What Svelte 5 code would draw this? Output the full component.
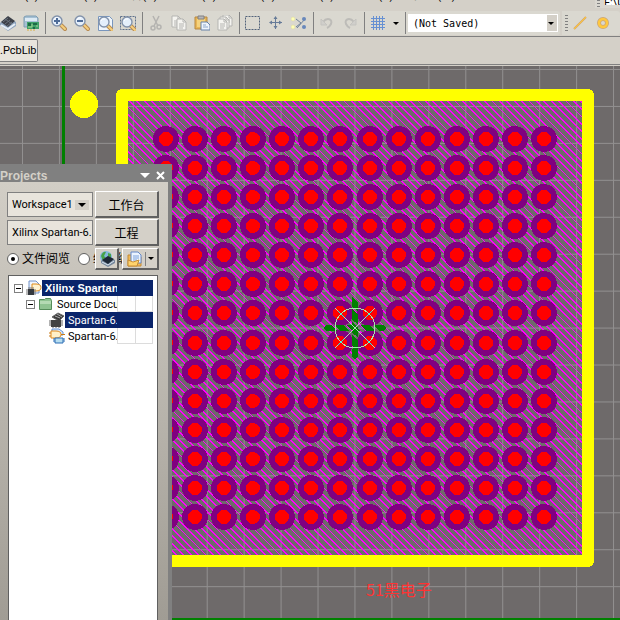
<script>
    const menus = ['文件(F)', '编辑(E)', '察看(V)', '工程(P)', '放置(P)', '工具(T)', '报告(R)', '窗口(W)'];

    const tools = [
        'chip', 'board', '|',
        'zoomIn', 'zoomOut', 'zoomPage', 'zoomArea', '|',
        'cut', 'copy', 'paste', 'duplicate', '|',
        'select', 'move', 'deselect', '|',
        'undo', 'redo', '|',
        'grid'
    ];

    // 14 x 14 ball grid
    const pitch = 29.08;
    const pads = [];
    for (let row = 0; row < 14; row++) {
        for (let col = 0; col < 14; col++) {
            pads.push({ x: Math.round(166 + col * pitch), y: Math.round(73 + row * pitch) });
        }
    }

    // 45 degree fill lines, clipped to the outline
    let hatch = '';
    for (let x = -322; x < 582; x += 7.4) {
        hatch += `M${x.toFixed(1)} 35l454 454`;
    }

    let view = $state('file');
    let saved = $state('(Not Saved)');
    let workspace = $state('Workspace1');
    let project = $state('Xilinx Spartan-6.LibPkg');
    let showProjects = $state(true);

    let selected = $state('pcb');
    const tree = [
        { id: 'root', level: 0, icon: 'project', text: 'Xilinx Spartan-6', open: true },
        { id: 'source', level: 1, icon: 'folder', text: 'Source Documents', open: true },
        { id: 'pcb', level: 2, icon: 'pcblib', text: 'Spartan-6.PcbLib' },
        { id: 'sch', level: 2, icon: 'schlib', text: 'Spartan-6.SchLib' }
    ];
</script>

{#snippet lens(x, y)}
    <path d="M{x + 4} {y + 4}l4 4" stroke="#b98a50" stroke-width="4" stroke-linecap="round" />
    <path d="M{x + 4} {y + 4}l4 4" stroke="#f5cf7e" stroke-width="2" stroke-linecap="round" />
    <circle cx={x} cy={y} r="5" fill="#e4effb" stroke="#8292aa" stroke-width="1.4" />
    <path d="M{x - 3} {y - 1}q1-3 4-2" stroke="#fff" fill="none" />
{/snippet}

{#snippet sheet(x, y, c)}
    <path d="M{x} {y}h6l3 3v8h-9z" fill="#f5f4f0" stroke={c} />
    <path d="M{x + 6} {y}v3h3M{x + 2} {y + 5}h5M{x + 2} {y + 7}h5M{x + 2} {y + 9}h4" fill="none" stroke={c} />
{/snippet}

{#snippet icon(name)}
    <svg class="icon" width="16" height="16" viewBox="0 0 16 16" fill="none" aria-hidden="true">
        {#if name === 'chip'}
            <path d="M0 8l7-6 9 5v4l-8 5-8-6z" fill="#8ea4be" />
            <path d="M1 10l7 4 7-5" stroke="#e5eef6" stroke-width="2" />
            <path d="M1 7l7-6 7 5-7 6z" fill="#3c4048" />
            <path d="M3 7l5-4M5 9l5-4M7 11l5-4M5 4l7 5" stroke="#68717c" />
        {:else if name === 'board'}
            <path d="M1 2l2-1h10l2 2v9H1z" fill="#a5c0d4" stroke="#7f9db2" />
            <path d="M2 3h12v3H2z" fill="#dceaf4" />
            <path d="M4 7h12v7H4z" fill="#3f9f68" />
            <path d="M5 8h3v3H5zM10 8h4v2h-4zM10 12h2v2h-2z" fill="#1d6b45" />
            <path d="M5 12h4M13 11h2M9 9v3" stroke="#a6d990" />
            <path d="M5 14v2M8 14v2M11 14v2" stroke="#d9ad40" />
        {:else if name === 'zoomIn'}
            {@render lens(6, 6)}
            <path d="M3 6h6M6 3v6" stroke="#4e6c98" stroke-width="2" />
        {:else if name === 'zoomOut'}
            {@render lens(6, 6)}
            <path d="M3 6h6" stroke="#4e6c98" stroke-width="2" />
        {:else if name === 'zoomPage'}
            <path d="M1.5 1.5h11l3 3v11h-14z" fill="#eff5fb" stroke="#7996bd" />
            {@render lens(7, 7)}
        {:else if name === 'zoomArea'}
            <rect x="0.5" y="1.5" width="15" height="13" stroke="#5e718b" stroke-dasharray="2 1" />
            {@render lens(7, 7)}
        {:else if name === 'cut'}
            <path d="M5 1l5 10M11 1L6 11" stroke="#b4b3b0" stroke-width="1.5" />
            <circle cx="5" cy="13" r="2" stroke="#b4b3b0" stroke-width="1.5" />
            <circle cx="11" cy="12" r="2" stroke="#b4b3b0" stroke-width="1.5" />
        {:else if name === 'copy'}
            {@render sheet(1, 1, '#b5b5b2')}
            {@render sheet(6, 4, '#b5b5b2')}
        {:else if name === 'paste'}
            <path d="M1 2h12v12H1z" fill="#e8b657" stroke="#b78842" />
            <path d="M3 4h8v8H3z" fill="#f5d27d" />
            <path d="M4 1h6v3H4z" fill="#b7b7b9" stroke="#808083" />
            <path d="M7 7h6l3 3v5H7z" fill="#eef4fc" stroke="#6681a8" />
            <path d="M9 10h3M9 12h5" stroke="#8ea8cc" />
        {:else if name === 'duplicate'}
            {@render sheet(6, 0, '#b5b5b2')}
            {@render sheet(3, 2, '#b5b5b2')}
            {@render sheet(1, 4, '#b5b5b2')}
        {:else if name === 'select'}
            <rect x="0.5" y="1.5" width="14" height="13" stroke="#52637a" stroke-dasharray="2 1" />
        {:else if name === 'move'}
            <path d="M7.5 2v12M2 7.5h12" stroke="#667b98" />
            <path d="M7.5 1l2 3h-4zM7.5 14l2-3h-4zM1 7.5l3-2v4zM14 7.5l-3-2v4z" fill="#667b98" />
        {:else if name === 'deselect'}
            <path d="M5 4l5 4-5 4M14 4L6 13" stroke="#70839c" />
            <circle cx="2" cy="4" r="2" fill="#ffffb5" stroke="#d9d7a1" stroke-width="0.5" />
            <circle cx="2" cy="12" r="2" fill="#ffffb5" stroke="#d9d7a1" stroke-width="0.5" />
            <circle cx="13" cy="4" r="2" fill="#6888bb" />
            <circle cx="13" cy="12" r="2" fill="#6888bb" />
        {:else if name === 'undo'}
            <path d="M4 7c4-5 10-3 8 2-1 2-2 3-4 4" stroke="#bdbcb8" stroke-width="2" />
            <path d="M2 4v6h6z" fill="#d0cfcb" stroke="#c4c3bf" />
        {:else if name === 'redo'}
            <path d="M12 7C8 2 2 4 4 9c1 2 2 3 4 4" stroke="#bdbcb8" stroke-width="2" />
            <path d="M14 4v6H8z" fill="#d0cfcb" stroke="#c4c3bf" />
        {:else if name === 'grid'}
            <path d="M3.5 1v14M6.5 1v14M9.5 1v14M12.5 1v14M1 3.5h14M1 6.5h14M1 9.5h14M1 12.5h14" stroke="#6690d2" />
        {:else if name === 'line'}
            <path d="M2 14L14 2" stroke="#d9a860" stroke-width="2" />
            <path d="M2 14L14 2" stroke="#ffc83a" />
        {:else if name === 'pad'}
            <circle cx="8" cy="8" r="4" stroke="#cba678" stroke-width="4" />
            <circle cx="8" cy="8" r="4" stroke="#ffc83f" stroke-width="2.5" />
        {:else if name === 'globe'}
            <circle cx="7" cy="6" r="6" fill="#83b8dd" />
            <path d="M2 5q2-5 5-4l-2 4 2 2-3 3zM9 2l3 1v4l-3-1z" fill="#47a348" />
            <path d="M2 10l7-5 7 4v3l-7 4-7-4z" fill="#77889d" />
            <path d="M3 9l6-4 6 3-6 5z" fill="#1d2836" />
            <path d="M3 11l6 3 6-4" stroke="#d9e6f0" />
        {:else if name === 'files'}
            <path d="M1 4h7l1 2h5v9H1z" fill="#f0b957" stroke="#c48b35" />
            <path d="M4 1h7l3 3v8H4z" fill="#eaf3ff" stroke="#6488c8" />
            <path d="M6 5h6M6 7h6M6 9h4" stroke="#7da1db" />
            <path d="M1 15V9l5 2 6-2-2 6z" fill="#ffd36c" stroke="#c48b35" />
        {:else if name === 'project'}
            <path d="M3 1h7l3 3v9H3z" fill="#eef5ff" stroke="#7192c9" />
            <path d="M6 4h4q5 0 5 3.500t-5 3.500H6z" fill="#fff2cf" stroke="#e08a19" />
            <path d="M2 9h6v6H2z" fill="#35393e" />
            <path d="M0 10h2M0 12h2M0 14h2M8 10h2M8 12h2M8 14h2M3 7v2M5 7v2M7 7v2" stroke="#777" />
        {:else if name === 'folder'}
            <path d="M1.500 3.500h5l1-1h5l1 2v9h-12z" fill="#8fc391" stroke="#568d5a" />
            <path d="M2 5h11v3H2z" fill="#b4dab3" />
        {:else if name === 'pcblib'}
            <path d="M3 5l6-4 6 3-5 5z" fill="#3b3b3b" stroke="#666" />
            <path d="M6 4l5 2M8 2l5 3" stroke="#aaa" />
            <path d="M2 8h10v7H2z" fill="#424242" />
            <path d="M0 9h2M0 11h2M0 13h2M12 9h2M12 11h2M12 13h2M4 15v1M7 15v1M10 15v1" stroke="#666" />
        {:else if name === 'schlib'}
            <path d="M3 1h7l4 3v3H3z" fill="#d9eaff" stroke="#6390d2" />
            <path d="M2 3h5q5 0 5 3.500t-5 3.500H2z" fill="#fff0c8" stroke="#e18b1c" />
            <path d="M0 5h2M0 8h2M12 6.500h4" stroke="#c87b18" />
            <path d="M6 10h8v5H6z" fill="#b8def0" stroke="#2b6db5" />
            <path d="M4 11h2M4 13h2M14 11h2M14 13h2" stroke="#2b6db5" />
        {/if}
    </svg>
{/snippet}

<div class="app">
    <div class="menubar">
        <nav>
            {#each menus as menu}
                <a href="#menu">{menu}</a>
            {/each}
        </nav>
        <div class="address">
            <span class="grip"></span>
            <input aria-label="Address" value="F:\Users" />
        </div>
    </div>

    <div class="toolbars">
        <div class="toolbar main">
            {#each tools as tool}
                {#if tool === '|'}
                    <span class="sep"></span>
                {:else}
                    <button class="tool" aria-label={tool}>{@render icon(tool)}</button>
                {/if}
            {/each}
            <button class="more" aria-label="Grid options"><span class="arrow"></span></button>
            <span class="sep"></span>
            <div class="combo saved">
                <select bind:value={saved} aria-label="View">
                    <option>(Not Saved)</option>
                </select>
                <span class="arrow"></span>
            </div>
        </div>
        <div class="toolbar place">
            <span class="grip"></span>
            <button class="tool" aria-label="Line">{@render icon('line')}</button>
            <button class="tool" aria-label="Pad">{@render icon('pad')}</button>
            <button class="tool" aria-label="Via">{@render icon('pad')}</button>
        </div>
    </div>

    <div class="tabs">
        <button class="tab">.PcbLib</button>
    </div>

    <main>
        <svg class="canvas" width="100%" height="100%" aria-label="Footprint">
            <defs>
                <pattern id="grid" x="22" y="3" width="36.94" height="36.94" patternUnits="userSpaceOnUse">
                    <path d="M0.5 0V37M0 0.5H37" stroke="#929090" />
                </pattern>
                <clipPath id="outline">
                    <rect x="128" y="35" width="454" height="454" />
                </clipPath>
            </defs>
            <rect width="100%" height="100%" fill="#6e6a6a" />
            <rect width="100%" height="100%" fill="url(#grid)" />
            <path d="M63.5 0V553H2000" fill="none" stroke="#008000" stroke-width="3" />
            <circle cx="84" cy="38" r="14" fill="#ff0" />
            <rect x="122" y="29" width="466" height="466" fill="none" stroke="#ff0" stroke-width="12" stroke-linejoin="round" />
            <path d={hatch} stroke="#f0f" stroke-width="1.2" clip-path="url(#outline)" />
            {#each pads as pad}
                <circle cx={pad.x} cy={pad.y} r="13" fill="#800080" />
                <circle cx={pad.x} cy={pad.y} r="7" fill="#f00" />
            {/each}
            <g fill="#008000">
                <path d="M352 231l6 5v9l-6-4zM352 243l6 5v10l-6-4zM352 256l6 5v10l-6-4zM352 269l6 5v10l-6-4zM352 283l6-4v11l-3 4-3-4z" />
                <path d="M323 262l4-3h5l5 6h-10zM334 259h9l6 6h-9zM346 259h8l6 6h-8zM360 259h9l6 6h-9zM374 259h9l4 3-4 3h-4z" />
            </g>
            <circle cx="355" cy="262" r="20" fill="none" stroke="#a5e9ad" />
            <path d="M335 242l40 40M375 242l-40 40" stroke="#b5d5bb" />
            <path d="M338 245l6 6M366 273l6 6M372 245l-6 6M344 273l-6 6" stroke="#0ff" />
            <text x="366" y="530" class="mark">51黑电子</text>
        </svg>

        {#if showProjects}
            <section class="panel">
                <header>
                    <h2>Projects</h2>
                    <button aria-label="Panel menu"><span class="arrow"></span></button>
                    <button aria-label="Close" onclick={() => (showProjects = false)}>
                        <svg width="9" height="9" viewBox="0 0 9 9"><path d="M1 1l7 7M8 1L1 8" stroke="#fff" stroke-width="2" /></svg>
                    </button>
                </header>
                <div class="body">
                    <div class="fields">
                        <div class="combo workspace">
                            <select bind:value={workspace} aria-label="Workspace">
                                <option>Workspace1</option>
                            </select>
                            <span class="arrow"></span>
                        </div>
                        <button class="push">工作台</button>
                        <input class="project" bind:value={project} aria-label="Project" />
                        <button class="push">工程</button>
                    </div>
                    <div class="views">
                        <label><input type="radio" name="view" value="file" bind:group={view} />文件阅览</label>
                        <label class="structure"><input type="radio" name="view" value="structure" bind:group={view} />结构编辑</label>
                        <div class="actions">
                            <button class="push" aria-label="Refresh">{@render icon('globe')}</button>
                            <button class="push wide" aria-label="Documents">{@render icon('files')}<i></i><span class="arrow"></span></button>
                        </div>
                    </div>
                    <ul class="tree">
                        {#each tree as node}
                            <li class="level{node.level}" class:active={node.id === 'root' || node.id === selected}>
                                {#if node.open}
                                    <button class="expander" aria-label="Collapse"></button>
                                {/if}
                                {@render icon(node.icon)}
                                <button class="node" onclick={() => (selected = node.id)}>{node.text}</button>
                                <span class="cell"></span>
                                <span class="cell"></span>
                            </li>
                        {/each}
                    </ul>
                </div>
            </section>
        {/if}
    </main>
</div>

<style>
    :global(body) {
        margin: 0;
        overflow: hidden;
    }

    .app {
        display: flex;
        flex-direction: column;
        height: 100vh;
        background: #d4d0c8;
        color: #000;
        font-family: Roboto, "Noto Sans CJK SC", sans-serif;
        font-size: 11px;
        overflow: hidden;
    }

    button, input, select {
        box-sizing: border-box;
        margin: 0;
        padding: 0;
        border: 0;
        border-radius: 0;
        background: none;
        color: inherit;
        font: inherit;
    }

    .icon {
        display: block;
        flex: none;
    }

    .arrow {
        width: 0;
        height: 0;
        border: 3px solid transparent;
        border-top: 3px solid #000;
        border-bottom: 0;
    }

    .menubar {
        display: flex;
        justify-content: space-between;
        height: 11px;
    }

    nav {
        display: flex;
        align-items: flex-end;
        height: 2px;
        overflow: hidden;
    }

    nav a {
        width: 59px;
        color: #000;
        font-size: 12px;
        line-height: 14px;
        text-decoration: none;
        white-space: nowrap;
    }

    .address {
        display: flex;
        gap: 4px;
        width: 23px;
        height: 8px;
        padding-left: 2px;
        background: #dad7d0;
        overflow: hidden;
    }

    .address input {
        width: 100px;
        height: 5px;
        background: #fff;
    }

    .grip {
        flex: none;
        width: 3px;
        height: 16px;
        background: repeating-linear-gradient(#808080 0 1px, transparent 1px 3px);
    }

    .toolbars {
        display: flex;
        gap: 2px;
        height: 25px;
        border-bottom: 1px solid #808080;
        overflow: hidden;
    }

    .toolbar {
        display: flex;
        align-items: center;
        height: 24px;
        background: #dad8d0;
        border-radius: 0 3px 3px 0;
    }

    .main {
        flex: none;
        padding-right: 2px;
    }

    .main .tool:first-child {
        margin-left: -4px;
    }

    .place {
        flex: 1;
        padding-left: 3px;
        overflow: hidden;
    }

    .tool {
        display: flex;
        flex: none;
        align-items: center;
        justify-content: center;
        width: 23px;
        height: 24px;
    }

    .more {
        display: flex;
        align-items: center;
        justify-content: center;
        width: 13px;
        height: 24px;
    }

    .sep {
        width: 1px;
        height: 22px;
        margin: 0 1px 0 3px;
        background: #808080;
    }

    .combo {
        display: flex;
        align-items: center;
        position: relative;
    }

    .combo select {
        width: 100%;
        height: 100%;
        appearance: none;
    }

    .combo .arrow {
        position: absolute;
        right: 3px;
        pointer-events: none;
    }

    .saved {
        width: 150px;
        height: 18px;
        margin-left: 1px;
        border: 1px solid #fff;
        box-sizing: border-box;
        background: linear-gradient(90deg, #fff 138px, #d4d0c8 138px);
    }

    .saved select {
        padding-left: 4px;
        font-family: "DejaVu Sans Mono", monospace;
        font-size: 10px;
    }

    .tabs {
        height: 28px;
        padding-top: 2px;
        border-bottom: 1px solid #808080;
        box-sizing: border-box;
        margin-bottom: 1px;
    }

    .tab {
        height: 23px;
        padding-right: 1px;
        border: 1px solid #808080;
        border-left: 0;
        border-radius: 0 2px 2px 0;
        background: #e8e4dc;
    }

    main {
        position: relative;
        flex: 1;
        min-height: 0;
    }

    .canvas {
        display: block;
        shape-rendering: crispEdges;
    }

    .mark {
        fill: #f33;
        font-family: "Noto Sans CJK SC", sans-serif;
        font-size: 16px;
    }

    /* docked over the editor */
    .panel {
        display: flex;
        flex-direction: column;
        position: absolute;
        top: 98px;
        bottom: 0;
        left: 0;
        width: 172px;
        box-sizing: border-box;
        padding-right: 4px;
        background: #808080;
    }

    header {
        display: flex;
        align-items: center;
        gap: 6px;
        height: 18px;
        padding-right: 3px;
        padding-top: 5px;
        box-sizing: border-box;
    }

    h2 {
        flex: 1;
        margin: 0;
        color: #d4d0c8;
        font-family: "Liberation Sans", sans-serif;
        font-size: 12px;
        line-height: 14px;
    }

    header button {
        display: flex;
    }

    header .arrow {
        border-width: 5px 5px 0;
        border-top-color: #fff;
    }

    .body {
        display: flex;
        flex: 1;
        flex-direction: column;
        min-height: 0;
        padding: 9px 10px 0 7px;
        background: linear-gradient(#d2cec6, #a09c94);
    }

    .fields {
        display: grid;
        grid-template-columns: 86px 64px;
        gap: 1px 2px;
        align-items: center;
    }

    .workspace, .project {
        height: 25px;
        border: 1px solid #808080;
        box-sizing: border-box;
        background: #e8e4dc;
    }

    .workspace select {
        padding-left: 4px;
    }

    .workspace .arrow {
        right: 6px;
        border: 4px solid #d4d0c8;
        border-top-color: #000;
        border-bottom: 0;
        outline: 3px solid #d4d0c8;
    }

    .project {
        width: 86px;
        padding-left: 4px;
    }

    .push {
        display: flex;
        align-items: center;
        justify-content: center;
        height: 27px;
        border: 1px solid #fff;
        border-right: 2px solid #606060;
        border-bottom: 2px solid #606060;
        background: #d4d0c8;
        font-size: 12px;
    }

    .views {
        display: flex;
        align-items: center;
        height: 26px;
        font-size: 12px;
        line-height: 16px;
    }

    .views label {
        display: flex;
        flex: none;
        align-items: center;
        gap: 3px;
        white-space: nowrap;
    }

    .views input {
        display: grid;
        place-items: center;
        width: 12px;
        height: 12px;
        border: 1px solid #606060;
        border-radius: 50%;
        background: #fff;
        appearance: none;
    }

    .views input:checked::before {
        content: "";
        width: 4px;
        height: 4px;
        border-radius: 50%;
        background: #000;
    }

    .structure {
        margin-left: 8px;
    }

    .actions {
        display: flex;
        flex: none;
        gap: 3px;
        margin-left: -46px;
        position: relative;
    }

    .actions .push {
        width: 24px;
        height: 22px;
    }

    .actions .wide {
        gap: 2px;
        width: 37px;
    }

    .wide i {
        width: 1px;
        height: 14px;
        background: #808080;
    }

    .tree {
        flex: 1;
        margin: 3px 0 0 1px;
        padding: 4px 4px 0 5px;
        border: 1px solid #606060;
        border-bottom: 0;
        background: #fff;
        list-style: none;
    }

    li {
        display: flex;
        align-items: center;
        height: 16px;
    }

    .level1 {
        padding-left: 12px;
    }

    .level2 {
        padding-left: 35px;
    }

    .expander {
        flex: none;
        width: 9px;
        height: 9px;
        margin-right: 3px;
        border: 1px solid #808080;
        background: linear-gradient(#000, #000) center / 5px 1px no-repeat;
    }

    .node {
        flex: 1;
        min-width: 0;
        height: 16px;
        padding-left: 3px;
        overflow: hidden;
        text-align: left;
        white-space: nowrap;
    }

    .level0 .node {
        font-family: "Liberation Sans", sans-serif;
        font-weight: bold;
    }

    .cell {
        flex: none;
        width: 18px;
        height: 16px;
        box-sizing: border-box;
        border-left: 1px solid #dcdcdc;
        border-bottom: 1px solid #dcdcdc;
    }

    .cell:last-child {
        border-right: 1px solid #dcdcdc;
    }

    .active .node, .active .cell {
        border-color: #0a246a;
        background: #0a246a;
        color: #fff;
    }
</style>
